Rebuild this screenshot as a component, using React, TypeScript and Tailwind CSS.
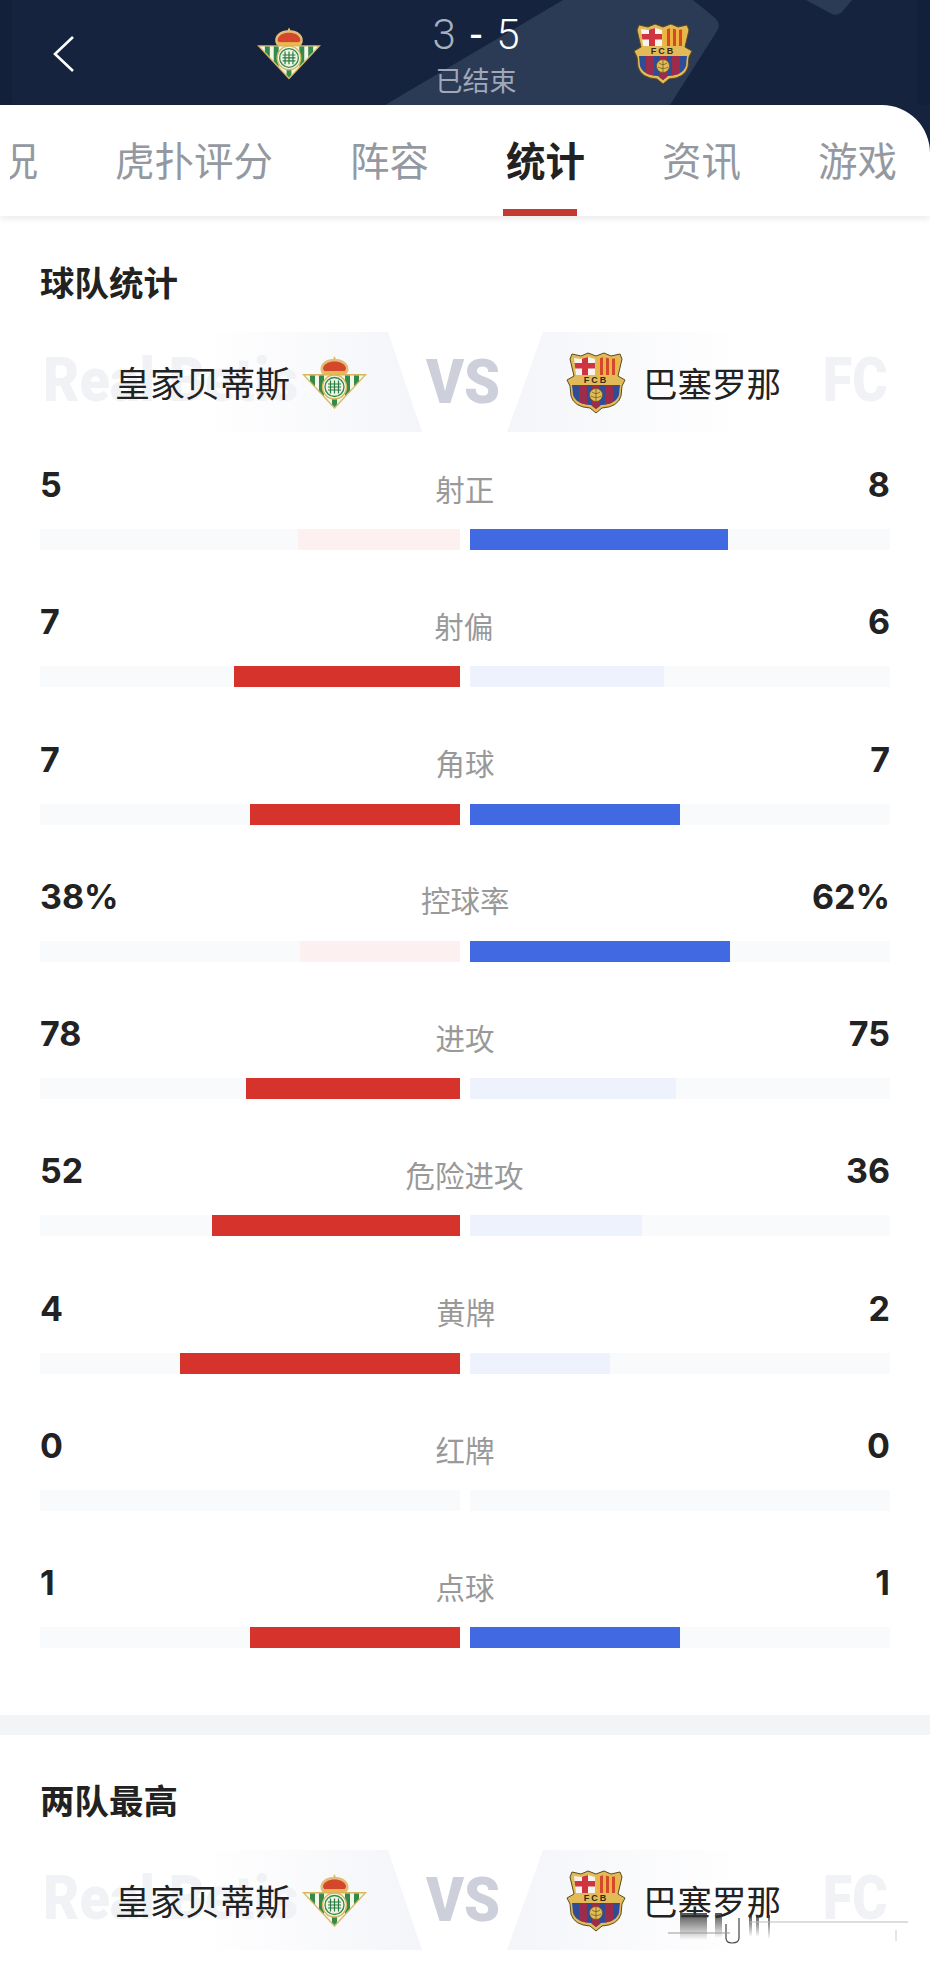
import { useId } from "react";

const cjk = "font-['Noto_Sans_CJK_SC','Noto_Sans',sans-serif]";

const stats = [
  { label: "射正", left: 5, right: 8, pct: false },
  { label: "射偏", left: 7, right: 6, pct: false },
  { label: "角球", left: 7, right: 7, pct: false },
  { label: "控球率", left: 38, right: 62, pct: true },
  { label: "进攻", left: 78, right: 75, pct: false },
  { label: "危险进攻", left: 52, right: 36, pct: false },
  { label: "黄牌", left: 4, right: 2, pct: false },
  { label: "红牌", left: 0, right: 0, pct: false },
  { label: "点球", left: 1, right: 1, pct: false },
];

const tabs = ["概况", "虎扑评分", "阵容", "统计", "资讯", "游戏"];

const BetisCrest = ({ className }: { className: string }) => {
  const id = useId();
  return (
    <svg viewBox="0 0 65 53" className={className}>
      <defs>
        <clipPath id={id}>
          <path d="M3 19.5H62L32.5 51Z" />
        </clipPath>
      </defs>
      {/* crown */}
      <path d="M32.5 0L34 3C42 3.5 47 8 46.5 14C46 18 42 22 32.5 22C23 22 19 18 18.5 14C18 8 23 3.5 31 3Z" fill="#e2bd78" />
      <path d="M21 13C21 8 27 5.5 32.5 5.5C38 5.5 44 8 44 13L42.5 15.5H22.5Z" fill="#d4472b" />
      <path d="M22 15H43V19H22Z" fill="#e9b84f" />
      {/* triangle */}
      <path d="M0 18H65L32.5 53Z" fill="#d8b55c" />
      <g clipPath={`url(#${id})`}>
        <rect x="0" y="18" width="65" height="35" fill="#f4f6ea" />
        <rect x="8" y="18" width="5" height="35" fill="#348a49" />
        <rect x="17" y="18" width="5" height="35" fill="#348a49" />
        <rect x="30" y="18" width="5" height="35" fill="#348a49" />
        <rect x="43" y="18" width="5" height="35" fill="#348a49" />
        <rect x="52" y="18" width="5" height="35" fill="#348a49" />
      </g>
      {/* centre badge */}
      <circle cx="32.5" cy="31" r="12" fill="#f5f7ec" stroke="#d8b55c" strokeWidth="1.4" />
      <circle cx="32.5" cy="31" r="9.5" fill="#eef4e4" stroke="#348a49" strokeWidth="1.3" />
      <path d="M28.5 24.5V37.5M32.5 24.5V37.5M36.5 24.5V37.5M26 28H39M26 31H39M26 34H39" stroke="#2a7a41" strokeWidth="1.2" fill="none" />
    </svg>
  );
};

const BarcaCrest = ({ className }: { className: string }) => {
  const id = useId();
  return (
    <svg viewBox="0 0 60 63" className={className}>
      <defs>
        <clipPath id={`${id}a`}>
          <path d="M8 7L15 8L22 6L29 8V24H10Z" />
        </clipPath>
        <clipPath id={`${id}b`}>
          <path d="M31 8L38 6L45 8L52 7L50 24H31Z" />
        </clipPath>
        <clipPath id={`${id}c`}>
          <path d="M6 34H54L53 44Q50 53 35 54L30 58L25 54Q10 53 7 44Z" />
        </clipPath>
      </defs>
      <path
        d="M6 3L15 5L22 2L30 5L38 2L45 5L54 3L56 8L52 25L59 29L56 35L55 45Q52 56 36 57L30 62L24 57Q8 56 5 45L4 35L1 29L8 25L4 8Z"
        fill="#e2bb58"
        stroke="#5b4a1d"
        strokeWidth="1"
      />
      {/* cross */}
      <g clipPath={`url(#${id}a)`}>
        <rect x="5" y="5" width="26" height="20" fill="#f7f4ef" />
        <rect x="16" y="5" width="6" height="20" fill="#cf3540" />
        <rect x="5" y="12" width="26" height="5.5" fill="#cf3540" />
      </g>
      {/* stripes */}
      <g clipPath={`url(#${id}b)`}>
        <rect x="30" y="5" width="24" height="20" fill="#edb53c" />
        <rect x="34" y="5" width="3" height="20" fill="#d2492f" />
        <rect x="40" y="5" width="3" height="20" fill="#d2492f" />
        <rect x="46" y="5" width="3" height="20" fill="#d2492f" />
      </g>
      <text x="30" y="32" textAnchor="middle" fontSize="9" fontWeight="700" letterSpacing="2" fill="#33291a" fontFamily="Liberation Sans, sans-serif">
        FCB
      </text>
      {/* lower field */}
      <g clipPath={`url(#${id}c)`}>
        <rect x="5" y="34" width="50" height="25" fill="#2f4d97" />
        <rect x="13" y="34" width="8" height="25" fill="#9b2c4b" />
        <rect x="26" y="34" width="8" height="25" fill="#9b2c4b" />
        <rect x="39" y="34" width="8" height="25" fill="#9b2c4b" />
      </g>
      <circle cx="30" cy="44" r="6.5" fill="#e5bd57" stroke="#6b5a22" strokeWidth="0.8" />
      <path d="M26 41C29 43 31 43 34 41M25 45C29 47 32 47 35 45M30 38V50" stroke="#6b5a22" strokeWidth="0.8" fill="none" />
    </svg>
  );
};

const TeamsRow = () => (
  <div className="relative flex h-[100px] items-center">
    {/* skewed background panels */}
    <div className="absolute left-[160px] top-0 h-full w-[222px] bg-gradient-to-r from-white to-[#f4f5f9] [clip-path:polygon(0_0,188px_0,100%_100%,0_100%)]" />
    <div className="absolute left-[467px] top-0 h-full w-[240px] bg-gradient-to-r from-[#f4f5f9] to-white [clip-path:polygon(36px_0,100%_0,100%_100%,0_100%)]" />
    <span className="absolute left-[3px] top-[12px] origin-left scale-x-[0.9] font-['Roboto'] text-[62px] leading-[72px] font-black whitespace-nowrap text-[#f1f2f5]">
      Real Betis
    </span>
    <span className="absolute right-[2px] top-[12px] origin-right scale-x-[0.87] font-['Roboto'] text-[62px] leading-[72px] font-black text-[#f1f2f6]">
      FC
    </span>

    <div className="relative flex w-[327px] items-center justify-end gap-[12px]">
      <span className={`${cjk} text-[35px] leading-[50px] whitespace-nowrap text-[#222]`}>皇家贝蒂斯</span>
      <BetisCrest className="h-[53px] w-[65px] shrink-0" />
    </div>
    <span className="relative ml-[59px] w-[75px] origin-left scale-x-[0.93] font-['Roboto'] text-[62px] leading-[72px] font-black text-[#cdd0da]">
      VS
    </span>
    <div className="relative ml-[65px] flex items-center gap-[17px]">
      <BarcaCrest className="h-[63px] w-[60px] shrink-0" />
      <span className={`${cjk} text-[34.5px] leading-[50px] whitespace-nowrap text-[#222]`}>巴塞罗那</span>
    </div>
  </div>
);

const StatRow = ({ label, left, right, pct }: (typeof stats)[number]) => {
  const total = left + right;
  const leftWidth = total ? (left / total) * 420 : 0;
  const rightWidth = total ? (right / total) * 420 : 0;
  const leftColor = left >= right ? "bg-[#d6332d]" : "bg-[#fdf0f0]";
  const rightColor = right >= left ? "bg-[#4169e1]" : "bg-[#eef2fd]";
  return (
    <div className="h-[137.3px]">
      <div className="flex h-[44px] items-center justify-between">
        <span className="font-['Inter'] text-[34px] leading-[40px] font-bold text-[#222]">
          {left}
          {pct ? "%" : ""}
        </span>
        <span className={`${cjk} mt-[5px] text-[29.5px] leading-[40px] text-[#999]`}>{label}</span>
        <span className="font-['Inter'] text-[34px] leading-[40px] font-bold text-[#222]">
          {right}
          {pct ? "%" : ""}
        </span>
      </div>
      <div className="mt-[22px] flex gap-[10px]">
        <div className="flex h-[21px] flex-1 justify-end bg-[#f9fafb]">
          <div className={leftColor} style={{ width: leftWidth }} />
        </div>
        <div className="flex h-[21px] flex-1 bg-[#f9fafb]">
          <div className={rightColor} style={{ width: rightWidth }} />
        </div>
      </div>
    </div>
  );
};

const App = () => {
  return (
    <div className={`relative h-[1963px] w-[930px] overflow-hidden bg-white ${cjk}`}>
      {/* Match header */}
      <header className="relative flex h-[105px] items-center bg-[#15233f] pl-[53px] pt-[2px]">
        <svg className="absolute inset-0 h-full w-full" viewBox="0 0 930 105">
          <path d="M385 105L563 0H693L714 17Q722 24 717 31L670 105Z" fill="#2b3a55" />
          <path d="M806 0H852L842 12Q836 17 830 13Z" fill="#2b3a55" />
          <rect x="0" y="0" width="12" height="105" fill="#12203a" />
          <rect x="917" y="0" width="13" height="105" fill="#12203a" />
        </svg>
        <svg viewBox="0 0 21 36" className="relative h-[36px] w-[21px] shrink-0" fill="none" stroke="#fff" strokeWidth="2.6">
          <path d="M20 1L2 18L20 35" />
        </svg>
        <BetisCrest className="relative ml-[183px] h-[53px] w-[64px] shrink-0" />
        <div className="relative flex w-[312px] shrink-0 flex-col items-center pr-[2px]">
          <div className="font-['Roboto'] text-[42px] leading-[50px] font-light whitespace-pre text-[#a8b1bf]">
            3<span className="mx-[4px] font-normal text-white"> - </span>
            <span className="text-white">5</span>
          </div>
          <div className="mt-[2px] text-[27px] leading-[36px] text-[#a0a8b8]">已结束</div>
        </div>
        <BarcaCrest className="relative h-[63px] w-[60px] shrink-0" />
      </header>

      {/* Tabs */}
      <div className="bg-[#15233f]">
        <nav className="relative z-10 flex h-[111px] overflow-hidden rounded-tr-[48px] bg-white shadow-[0_3px_6px_rgba(0,0,0,0.08)]">
          <div className="ml-[-41px] flex gap-[77px]">
            {tabs.map((tab) => (
              <div key={tab} className="relative whitespace-nowrap">
                <span className={`mt-[26px] block text-[39.5px] leading-[56px] ${tab === "统计" ? "font-bold text-[#222]" : "text-[#9499a1]"}`}>
                  {tab}
                </span>
                {tab === "统计" && <div className="absolute bottom-0 left-[-3px] h-[7px] w-[74px] bg-[#c23a32]" />}
              </div>
            ))}
          </div>
          <div className="absolute left-0 top-0 h-full w-[10px] bg-white" />
        </nav>
      </div>

      {/* Team stats */}
      <section className="h-[1499px] px-[40px] pt-[45px]">
        <h2 className="text-[34.5px] leading-[40px] font-bold text-[#222]">球队统计</h2>
        <div className="mt-[31px]">
          <TeamsRow />
        </div>
        <div className="mt-[31px]">
          {stats.map((s) => (
            <StatRow key={s.label} {...s} />
          ))}
        </div>
      </section>

      <div className="h-[20px] bg-[#f3f4f6]" />

      {/* Team highs */}
      <section className="px-[40px] pt-[44px]">
        <h2 className="text-[34.5px] leading-[40px] font-bold text-[#222]">两队最高</h2>
        <div className="mt-[31px]">
          <TeamsRow />
        </div>
      </section>

      {/* smudged watermark in the bottom corner */}
      <svg className="absolute bottom-0 right-0 h-[63px] w-[270px]" viewBox="0 0 270 63">
        <defs>
          <linearGradient id="smudge" x1="0" y1="0" x2="0" y2="1">
            <stop offset="0" stopColor="#333" stopOpacity="0.85" />
            <stop offset="1" stopColor="#333" stopOpacity="0" />
          </linearGradient>
        </defs>
        <rect x="20" y="13" width="27" height="27" fill="url(#smudge)" />
        <rect x="55" y="13" width="7" height="25" fill="url(#smudge)" />
        <rect x="89" y="15" width="3" height="22" fill="url(#smudge)" />
        <rect x="96" y="15" width="3" height="22" fill="url(#smudge)" />
        <rect x="108" y="15" width="2" height="24" fill="url(#smudge)" />
        <path d="M66 24V38Q66 43 72 43Q79 43 79 38V18" fill="none" stroke="#444" strokeWidth="1.2" />
        <path d="M90 22H248" stroke="#bbb" strokeWidth="1" />
        <path d="M8 33H70" stroke="#999" strokeWidth="1" />
        <path d="M236 30V41" stroke="#ccc" strokeWidth="1" />
      </svg>
    </div>
  );
};

export default App;
